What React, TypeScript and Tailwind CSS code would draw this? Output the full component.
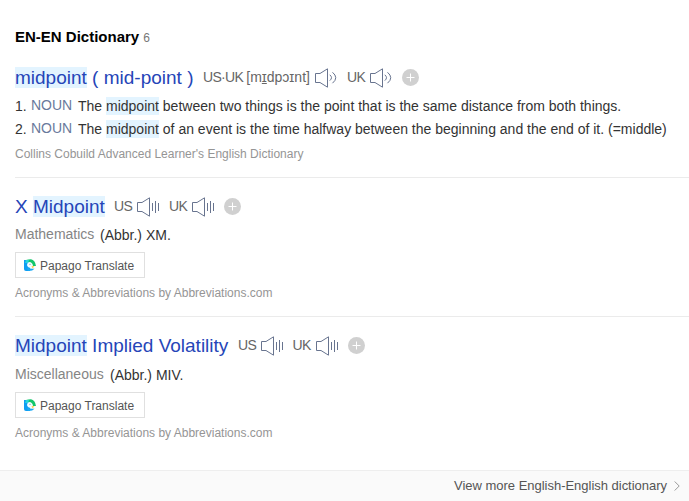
import React from "react";

const Mark = ({ children }: { children: React.ReactNode }) => (
  <span className="bg-[#e3f4ff]">{children}</span>
);

const WordMark = ({ children }: { children: React.ReactNode }) => (
  <span className="bg-[#e3f4ff] py-px">{children}</span>
);

const Speaker = ({ kind }: { kind: "wave" | "bars" }) => (
  <svg className="h-5 w-[23px] shrink-0" viewBox="0 0 23 20" fill="none" stroke="#68748f">
    <path d="M.5 5.5H5L12.5 .8v18.4L5 14.5H.5Z" />
    {kind === "wave" ? (
      <path d="M14.8 6.8Q18.2 9.7 14.8 12.6M17.5 4.3Q24 9.7 17.5 15.2" />
    ) : (
      <path d="M15.5 6v8M18.5 4v12M21.5 6v8" />
    )}
  </svg>
);

const Plus = () => (
  <svg className="mb-px ml-[9px] h-[17px] w-[17px] shrink-0" viewBox="0 0 17 17">
    <circle cx="8.5" cy="8.5" r="8.5" fill="#d0d0d0" />
    <path d="M8.5 4.5v8M4.5 8.5h8" stroke="#fff" fill="none" />
  </svg>
);

const Sounds = ({ first, kind }: { first: React.ReactNode; kind: "wave" | "bars" }) => (
  <div className="flex h-6 items-center text-[14px] text-[#666]">
    {first}
    <Speaker kind={kind} />
    <span className="mb-px ml-[9px] w-[23px] tracking-[-0.7px]">UK</span>
    <Speaker kind={kind} />
    <Plus />
  </div>
);

const Papago = () => (
  <div className="flex h-[26px] w-[130px] items-center border border-[#e0e0e0] pl-[8px] text-[12px] text-[#555]">
    <svg className="mr-[4px] h-3 w-3" viewBox="0 0 12 12">
      <path d="M0 1h6v11H2Q0 12 0 10Z" fill="#0e9df2" />
      <path d="M2 1Q4 .3 7 .3Q11 1 12 7H8L4 2.5Z" fill="#13c66b" />
      <path d="M2 1H5L4 4H1Z" fill="#25d5d8" />
      <path d="M3 6Q3.3 3.2 5.5 3Q8 3.2 9 6.5L7.5 9Q3.5 9 3 6Z" fill="#f4fdff" />
      <path d="M3 8.5Q7 10.5 10.5 9.5Q9 12 4 12Z" fill="#18a9f4" />
      <path d="M7.5 7l3 .3L8.5 9.5Z" fill="#ffd14a" />
      <circle cx="6" cy="5.3" r=".5" fill="#327a88" />
    </svg>
    <span className="mt-px">Papago Translate</span>
  </div>
);

const Source = ({ children }: { children: string }) => (
  <p className="h-5 text-[12px] leading-5 text-[#959595]">{children}</p>
);

const titleClass = "whitespace-nowrap text-[19px] leading-[22px] text-[#2545b8]";

export default function App() {
  return (
    <main className="flex h-[501px] w-[689px] flex-col overflow-hidden bg-white font-['Liberation_Sans',Arial,sans-serif] whitespace-nowrap">
      <header className="mt-[27px] flex h-5 items-center pl-[15px]">
        <h1 className="text-[15px] leading-5 font-bold text-black">EN-EN Dictionary</h1>
        <span className="mt-px ml-1 text-[12px] text-[#777]">6</span>
      </header>

      <section className="mt-[19px] ml-[15px] h-[112px] border-b border-[#ebebeb]">
        <div className="flex h-6 items-center">
          <h2 className={titleClass + " w-[188px]"}><Mark>midpoint</Mark> ( mid-point )</h2>
          <Sounds
            kind="wave"
            first={
              <span className="mb-px w-[112px]">
                <span className="tracking-[-0.7px]">US·UK </span>[m<u>ɪ</u>dpɔɪnt]
              </span>
            }
          />
        </div>
        <ol className="mt-[5px] text-[14px] leading-[23px] text-[#333]">
          <li className="flex h-[23px]">
            <span className="w-4">1.</span>
            <span className="w-[47px] leading-[21px] text-[#69799c]">NOUN</span>
            <span>The <WordMark>midpoint</WordMark> between two things is the point that is the same distance from both things.</span>
          </li>
          <li className="flex h-[23px]">
            <span className="w-4">2.</span>
            <span className="w-[47px] leading-[21px] text-[#69799c]">NOUN</span>
            <span>The <WordMark>midpoint</WordMark> of an event is the time halfway between the beginning and the end of it. (=middle)</span>
          </li>
        </ol>
        <div className="mt-[3px]"><Source>Collins Cobuild Advanced Learner's English Dictionary</Source></div>
      </section>

      <section className="ml-[15px] h-[139px] border-b border-[#ebebeb] pt-[17px]">
        <div className="flex h-6 items-center">
          <h2 className={titleClass + " w-[99px]"}>X <Mark>Midpoint</Mark></h2>
          <Sounds kind="bars" first={<span className="mb-px w-[23px] tracking-[-0.7px]">US</span>} />
        </div>
        <p className="mt-[6px] flex h-5 text-[14px] leading-5 text-[#333]">
          <span className="w-[85px] leading-[18px] text-[#858585]">Mathematics</span>
          <span>(Abbr.) XM.</span>
        </p>
        <div className="mt-[7px] mb-[5px]"><Papago /></div>
        <Source>Acronyms &amp; Abbreviations by Abbreviations.com</Source>
      </section>

      <section className="ml-[15px] h-[153px] pt-[17px]">
        <div className="flex h-6 items-center">
          <h2 className={titleClass + " w-[223px]"}><Mark>Midpoint</Mark> Implied Volatility</h2>
          <Sounds kind="bars" first={<span className="mb-px w-[22.5px] tracking-[-0.7px]">US</span>} />
        </div>
        <p className="mt-[7px] flex h-5 text-[14px] leading-5 text-[#333]">
          <span className="w-[95px] leading-[18px] text-[#858585]">Miscellaneous</span>
          <span>(Abbr.) MIV.</span>
        </p>
        <div className="mt-[7px] mb-[5px]"><Papago /></div>
        <Source>Acronyms &amp; Abbreviations by Abbreviations.com</Source>
      </section>

      <footer className="flex h-[31px] items-center justify-end border-t border-[#eee] bg-[#fafafa] pr-[9px] text-[13px] text-[#555]">
        <span className="tracking-[-0.02px]">View more English-English dictionary</span>
        <svg className="ml-[7px] h-[10px] w-[6px]" viewBox="0 0 6 10" fill="none" stroke="#999">
          <path d="M.7.5 5.2 5 .7 9.5" />
        </svg>
      </footer>
    </main>
  );
}
